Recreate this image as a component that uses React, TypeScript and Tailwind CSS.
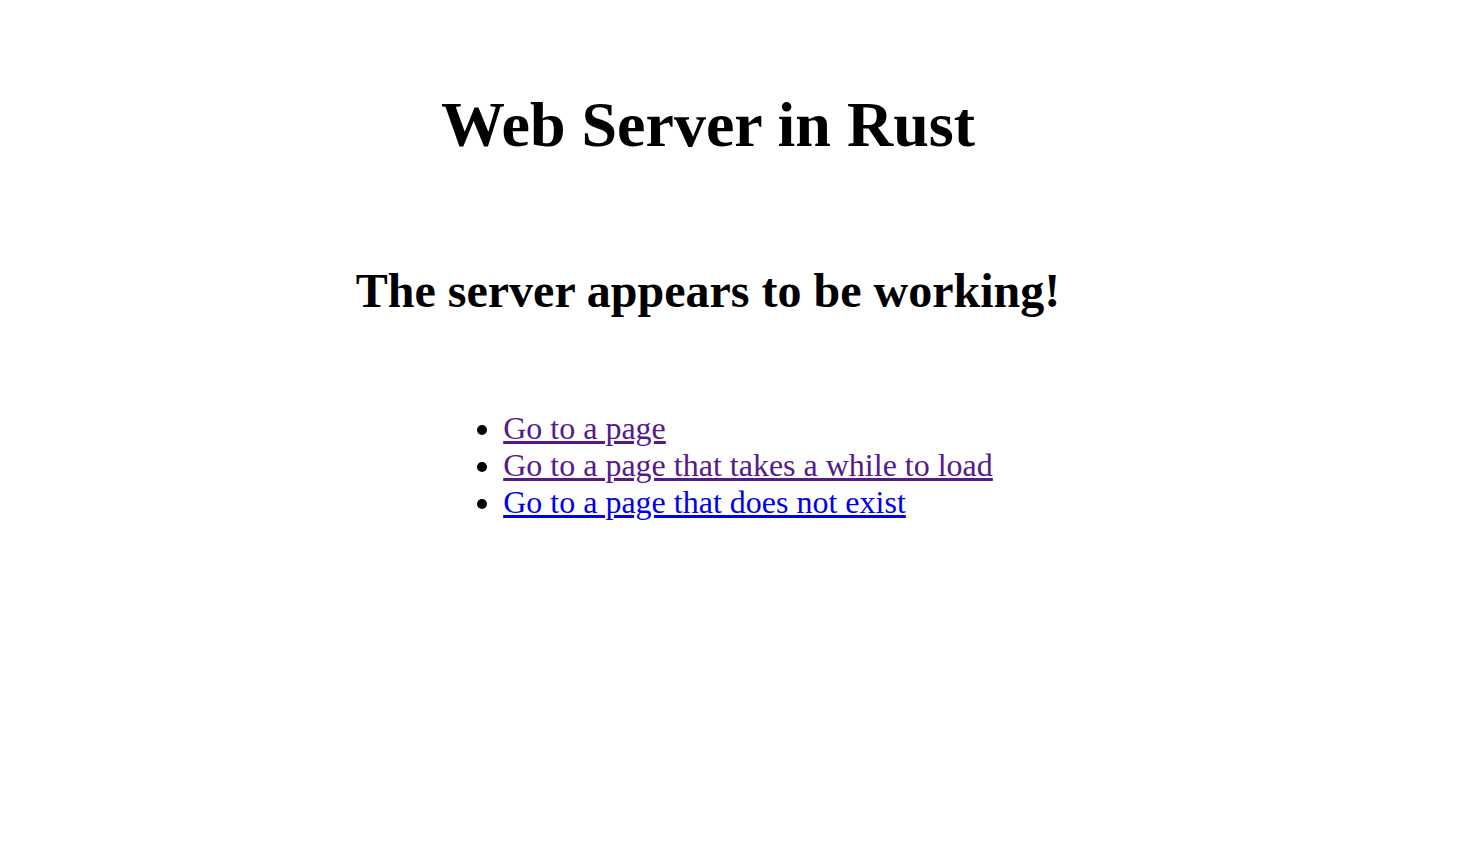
const links = [
  { label: "Go to a page", visited: true },
  { label: "Go to a page that takes a while to load", visited: true },
  { label: "Go to a page that does not exist", visited: false },
];

export default function App() {
  return (
    <div className="min-h-[854px] w-[1416px] bg-white flex flex-col items-center text-black font-['Liberation_Serif',_'Times_New_Roman',_serif]">
      <h1 className="mt-[88px] text-[64px] font-bold leading-[74px]">Web Server in Rust</h1>
      <h2 className="mt-[101px] text-[48px] font-bold leading-[55px]">The server appears to be working!</h2>
      <ul className="mt-[92px] w-fit list-disc pl-[80px] text-[32px] leading-[37px]">
        {links.map((l) => (
          <li key={l.label}>
            <a
              href="#"
              className={l.visited ? "underline text-[#551a8b]" : "underline text-[#0000ee]"}
            >
              {l.label}
            </a>
          </li>
        ))}
      </ul>
    </div>
  );
}
